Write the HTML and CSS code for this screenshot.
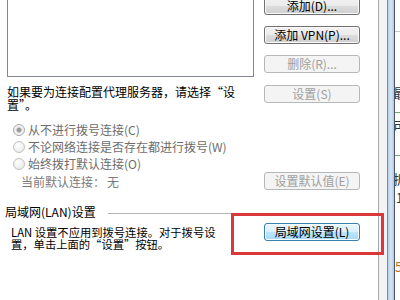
FILE: index.html
```html
<!DOCTYPE html>
<html lang="zh-CN">

<head>
    <meta charset="UTF-8">
    <meta name="viewport" content="width=device-width, initial-scale=1.0">
    <title>连接</title>
    <link rel="stylesheet" href="styles.css">
</head>

<body>
    <div class="screen">
        <div class="dialog">
            <div class="row top">
                <div class="listbox"></div>
                <div class="btn-col">
                    <button class="btn">添加(D)...</button>
                    <button class="btn">添加 VPN(P)...</button>
                    <button class="btn" disabled>删除(R)...</button>
                </div>
            </div>

            <div class="row proxy">
                <p class="proxy-text">如果要为连接配置代理服务器，请选择“设置”。</p>
                <button class="btn" disabled>设置(S)</button>
            </div>

            <div class="radios">
                <label class="radio checked"><span class="dot"></span>从不进行拨号连接(C)</label>
                <label class="radio"><span class="dot"></span>不论网络连接是否存在都进行拨号(W)</label>
                <label class="radio"><span class="dot"></span>始终拨打默认连接(O)</label>
            </div>

            <div class="row current">
                <span class="current-text">当前默认连接：<span class="none">无</span></span>
                <button class="btn" disabled>设置默认值(E)</button>
            </div>

            <div class="group-title">
                <span>局域网(LAN)设置</span>
                <i class="rule"></i>
            </div>

            <div class="row lan">
                <p class="lan-text">LAN 设置不应用到拨号连接。对于拨号设置，单击上面的“设置”按钮。</p>
                <span class="mark-wrap">
                    <button class="btn btn-blue">局域网设置(L)</button>
                    <span class="mark"></span>
                </span>
            </div>
        </div>

        <div class="frame">
            <div class="edge-line"></div>
            <div class="edge-pad"></div>
            <div class="edge-dark"></div>
            <div class="edge-blue"></div>
            <div class="edge-dark2"></div>
            <div class="behind">
                <div class="bh-rule"></div>
                <div class="bh-char bh-c1">最</div>
                <div class="bh-rule bh-green bh-g1"></div>
                <div class="bh-char bh-c2">可</div>
                <div class="bh-rule bh-green bh-g2"></div>
                <div class="bh-char bh-c3">折</div>
                <div class="bh-char bh-c4">1</div>
                <div class="bh-char bh-c5">5</div>
            </div>
        </div>
    </div>
</body>

</html>
```

FILE: styles.css
```css
body {
    margin: 0;
    font-family: "Noto Sans CJK SC", "Liberation Sans", sans-serif;
    font-size: 12px;
    color: #000;
    background-color: #fff;
    overflow: hidden;
}

.screen {
    display: flex;
    width: 400px;
    height: 300px;
    overflow: hidden;
}

.dialog {
    position: relative;
    flex: none;
    width: 378px;
    padding-left: 7px;
    box-sizing: border-box;
    background-color: #fff;
}

p {
    margin: 0;
}

.row {
    display: grid;
    grid-template-columns: 247px 96px;
    column-gap: 10px;
    align-items: start;
}

/* buttons */

.btn {
    height: 18px;
    width: 96px;
    padding: 0;
    font-family: inherit;
    font-size: 12px;
    line-height: 16px;
    color: #000;
    border: 1px solid #707070;
    border-radius: 3px;
    background: linear-gradient(#f2f2f2 0%, #ebebeb 50%, #dddddd 50%, #cfcfcf 100%);
    box-shadow: inset 0 0 0 1px #fbfbfb;
    white-space: nowrap;
}

.btn:disabled {
    color: #a0a0a0;
    border-color: #b5b8ba;
    background: #f4f4f4;
    box-shadow: none;
}

.btn-blue {
    border-color: #3c7fb1;
    background: linear-gradient(#eaf6fd 0%, #d9f0fc 50%, #bee6fd 50%, #a7d9f5 100%);
    box-shadow: inset 0 0 0 1px #f4fbff;
}

/* top: list + buttons */

.top {
    margin-top: -4px;
}

.listbox {
    height: 81px;
    border: 1px solid #828790;
    box-sizing: border-box;
    background-color: #fff;
}

.btn-col {
    display: flex;
    flex-direction: column;
    gap: 11px;
    padding-top: 1px;
}

/* proxy text */

.proxy {
    margin-top: 8px;
}

.proxy-text {
    width: 232px;
    line-height: 13px;
}

/* radios */

.radios {
    margin-top: 10px;
}

.radio {
    display: flex;
    align-items: center;
    height: 17px;
    padding-left: 6px;
    color: #6d6d6d;
}

.dot {
    width: 10px;
    height: 10px;
    margin-right: 3px;
    border: 1px solid #c2c2c2;
    border-radius: 50%;
    background: radial-gradient(circle at 40% 35%, #ffffff, #e4e4e4);
}

.radio.checked .dot {
    border-color: #a8a8a8;
    background: radial-gradient(circle, #8e8e8e 0, #a4a4a4 2px, #e9e9e9 3px, #f7f7f7 5px);
}

/* current default */

.current {
    align-items: center;
    height: 18px;
}

.current-text {
    padding-left: 14px;
    color: #7a7a7a;
}

.none {
    margin-left: 2px;
}

/* LAN group */

.group-title {
    display: flex;
    align-items: center;
    margin-top: 15px;
    margin-left: -2px;
    line-height: 14px;
}

.rule {
    flex: 1;
    height: 1px;
    margin: 2px 6px 0 12px;
    background-color: #b4b4b4;
}

.lan {
    margin-top: 7px;
}

.lan-text {
    width: 220px;
    padding-left: 4px;
    font-size: 11.3px;
    line-height: 12px;
}

.mark-wrap {
    position: relative;
    display: block;
    margin-top: -3px;
}

.mark {
    position: absolute;
    top: -10px;
    right: -24px;
    bottom: -14px;
    left: -33px;
    border: 3px solid #d9383a;
    pointer-events: none;
}

/* window frame on the right */

.frame {
    display: flex;
    flex: 1;
    min-width: 0;
}

.frame > div {
    flex: none;
}

.edge-line {
    width: 1px;
    background-color: #a9a9a9;
}

.edge-pad {
    width: 8px;
    background-color: #f3f3f3;
}

.edge-dark {
    width: 1px;
    background-color: #7d8a99;
}

.edge-blue {
    width: 6px;
    background: linear-gradient(to right, #b7d0ea, #d7e6f5, #aec9e6);
}

.edge-dark2 {
    width: 1px;
    background-color: #4d5664;
}

.frame > .behind {
    flex: 1;
    min-width: 0;
    overflow: hidden;
    background-color: #fff;
}

.bh-rule {
    height: 1px;
    margin-top: 31px;
    background-color: #c9c9c9;
}

.bh-green {
    background-color: #7aa86a;
}

.bh-g1 {
    margin-top: 12px;
}

.bh-g2 {
    margin-top: 22px;
}

.bh-char {
    margin-left: -2px;
    font-size: 13px;
    line-height: 14px;
    color: #333;
    white-space: nowrap;
}

.bh-c1 {
    margin-top: 54px;
}

.bh-c2 {
    margin-top: 6px;
}

.bh-c3 {
    margin-top: 16px;
}

.bh-c4 {
    margin-top: 5px;
    margin-left: 1px;
}

.bh-c5 {
    margin-top: 55px;
    margin-left: 0;
    color: #c4701e;
}
```
